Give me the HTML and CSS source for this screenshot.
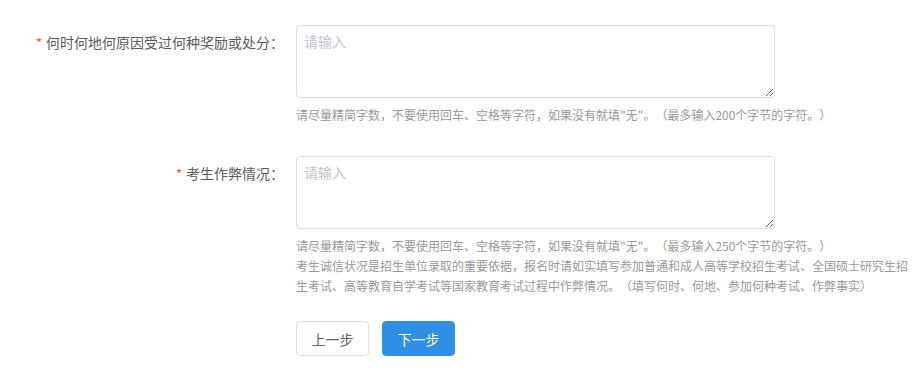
FILE: index.html
```html
<!DOCTYPE html>
<html>
<head>
    <title>考生信息</title>
    <link rel="stylesheet" href="styles.css">
</head>

<body>
    <form class="apply-form">
        <div class="form-item">
            <label class="form-label"><span class="req">*</span>何时何地何原因受过何种奖励或处分：</label>
            <div class="form-content">
                <textarea class="form-textarea" placeholder="请输入"></textarea>
                <div class="form-tip">请尽量精简字数，不要使用回车、空格等字符，如果没有就填"无"。（最多输入200个字节的字符。）</div>
            </div>
        </div>

        <div class="form-item">
            <label class="form-label"><span class="req">*</span>考生作弊情况：</label>
            <div class="form-content">
                <textarea class="form-textarea" placeholder="请输入"></textarea>
                <div class="form-tip">请尽量精简字数，不要使用回车、空格等字符，如果没有就填"无"。（最多输入250个字节的字符。）<br>考生诚信状况是招生单位录取的重要依据，报名时请如实填写参加普通和成人高等学校招生考试、全国硕士研究生招生考试、高等教育自学考试等国家教育考试过程中作弊情况。（填写何时、何地、参加何种考试、作弊事实）</div>
            </div>
        </div>

        <div class="form-actions">
            <button type="button" class="btn">上一步</button>
            <button type="button" class="btn btn-primary">下一步</button>
        </div>
    </form>
</body>
</html>
```

FILE: styles.css
```css
body { margin: 0; background: #fff; font-family: "Noto Sans CJK SC", "Liberation Sans", sans-serif; color: #606266; text-spacing-trim: space-all; }
.apply-form { padding-top: 25px; }

.form-item { display: flex; margin-bottom: 31px; }
.form-label { width: 296px; box-sizing: border-box; padding-right: 12px; text-align: right; font-size: 14px; line-height: 34px; color: #5c5c5c; flex-shrink: 0; }
.req { color: #e2574c; margin-right: 4px; font-size: 13px; }
.form-content { flex: 1; min-width: 0; }

.form-textarea {
    display: block;
    width: 479px;
    height: 73px;
    box-sizing: border-box;
    padding: 5px 7px 6px;
    border: 1px solid #dcdfe6;
    border-radius: 4px;
    font-family: inherit;
    font-size: 14px;
    line-height: 20px;
    color: #606266;
    resize: vertical;
    outline: none;
}
.form-textarea::placeholder { color: #c0c4cc; }

.form-tip { margin-top: 7px; font-size: 12px; line-height: 20px; color: #999; }

.form-actions { display: flex; gap: 13px; padding-left: 296px; margin-top: -6px; }
.btn { width: 73px; height: 35px; border: 1px solid #dcdfe6; border-radius: 4px; background: #fff; color: #606266; font-family: inherit; font-size: 14px; cursor: pointer; }
.btn-primary { background: #2f8fe5; border-color: #2f8fe5; color: #fff; }
```
